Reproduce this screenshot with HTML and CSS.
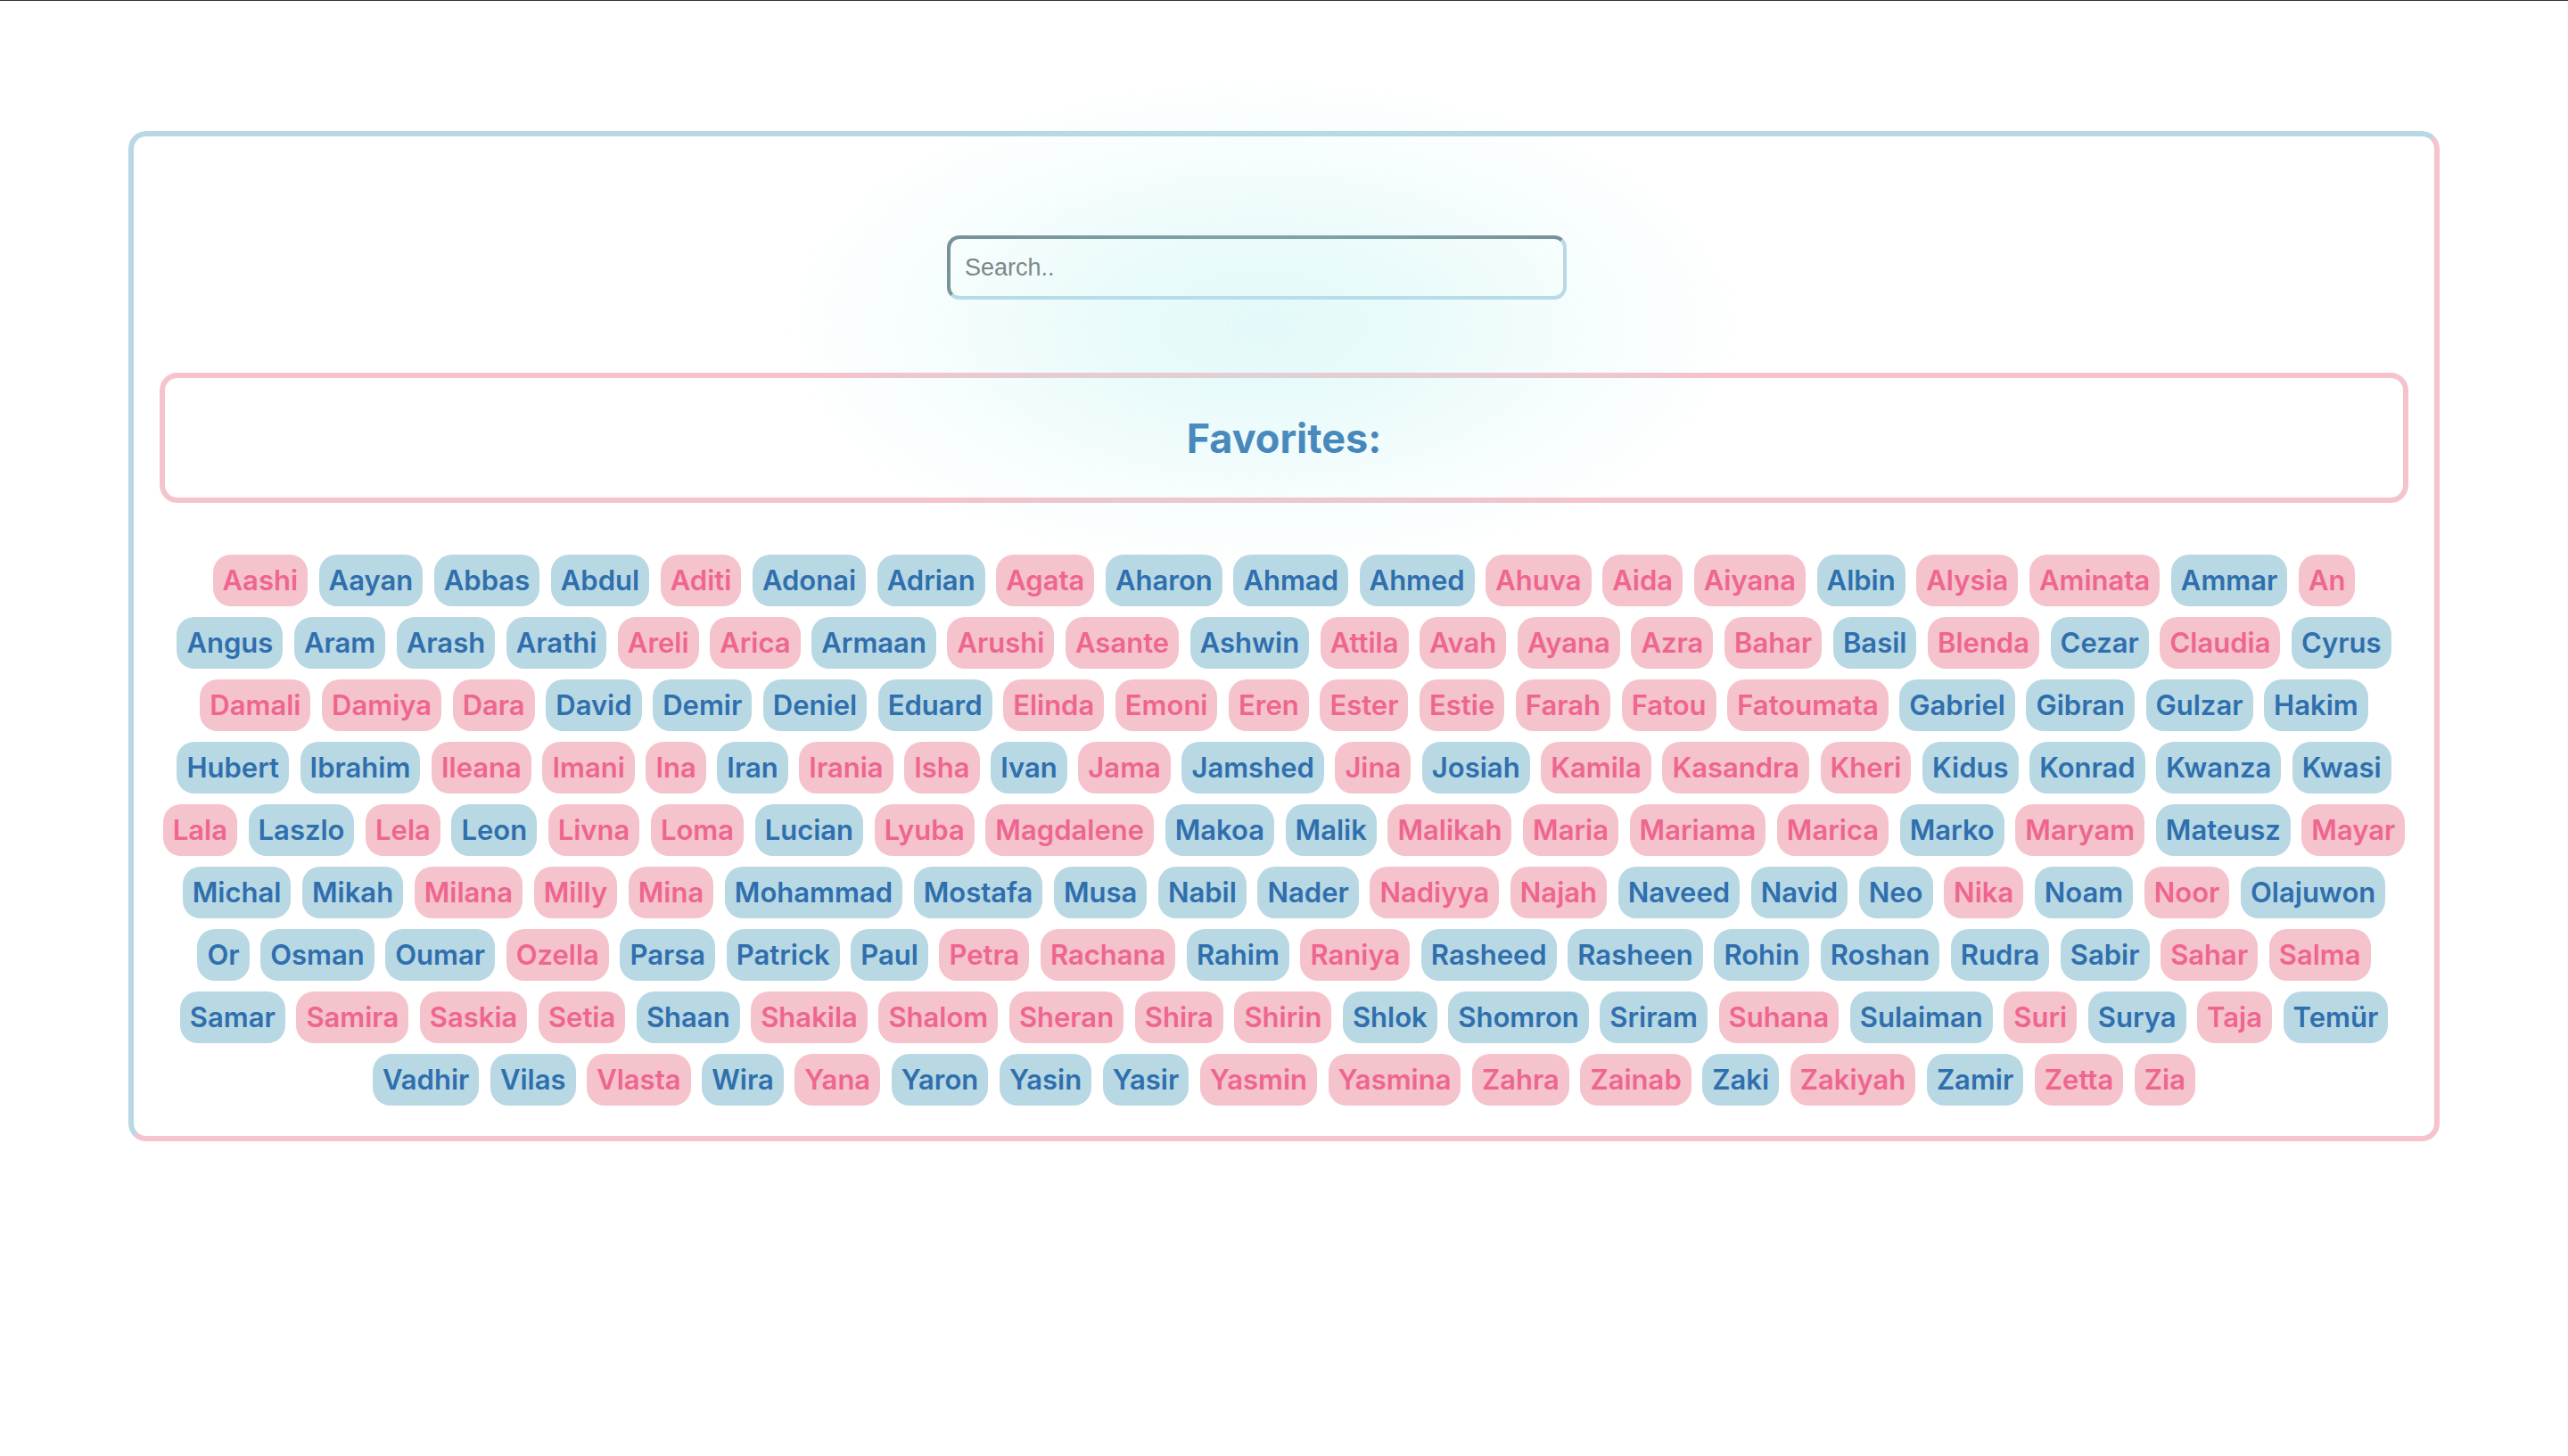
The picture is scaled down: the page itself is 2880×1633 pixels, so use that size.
FILE: index.html
```html
<!DOCTYPE html>
<html lang="en">
<head>
<meta charset="utf-8">
<title>Favorites</title>
<link rel="stylesheet" href="styles.css">
</head>
<body>
<div class="glow"></div>
<main class="app">
  <div class="search-row">
    <input class="search" type="text" placeholder="Search..">
  </div>
  <section class="favorites">
    <h2 class="favorites-title">Favorites:</h2>
  </section>
  <ul class="names">
    <li class="pill girl">Aashi</li><li class="pill boy">Aayan</li><li class="pill boy">Abbas</li><li class="pill boy">Abdul</li><li class="pill girl">Aditi</li><li class="pill boy">Adonai</li><li class="pill boy">Adrian</li><li class="pill girl">Agata</li><li class="pill boy">Aharon</li><li class="pill boy">Ahmad</li><li class="pill boy">Ahmed</li><li class="pill girl">Ahuva</li><li class="pill girl">Aida</li><li class="pill girl">Aiyana</li><li class="pill boy">Albin</li><li class="pill girl">Alysia</li><li class="pill girl">Aminata</li><li class="pill boy">Ammar</li><li class="pill girl">An</li>
    <li class="pill boy">Angus</li><li class="pill boy">Aram</li><li class="pill boy">Arash</li><li class="pill boy">Arathi</li><li class="pill girl">Areli</li><li class="pill girl">Arica</li><li class="pill boy">Armaan</li><li class="pill girl">Arushi</li><li class="pill girl">Asante</li><li class="pill boy">Ashwin</li><li class="pill girl">Attila</li><li class="pill girl">Avah</li><li class="pill girl">Ayana</li><li class="pill girl">Azra</li><li class="pill girl">Bahar</li><li class="pill boy">Basil</li><li class="pill girl">Blenda</li><li class="pill boy">Cezar</li><li class="pill girl">Claudia</li><li class="pill boy">Cyrus</li>
    <li class="pill girl">Damali</li><li class="pill girl">Damiya</li><li class="pill girl">Dara</li><li class="pill boy">David</li><li class="pill boy">Demir</li><li class="pill boy">Deniel</li><li class="pill boy">Eduard</li><li class="pill girl">Elinda</li><li class="pill girl">Emoni</li><li class="pill girl">Eren</li><li class="pill girl">Ester</li><li class="pill girl">Estie</li><li class="pill girl">Farah</li><li class="pill girl">Fatou</li><li class="pill girl">Fatoumata</li><li class="pill boy">Gabriel</li><li class="pill boy">Gibran</li><li class="pill boy">Gulzar</li><li class="pill boy">Hakim</li>
    <li class="pill boy">Hubert</li><li class="pill boy">Ibrahim</li><li class="pill girl">Ileana</li><li class="pill girl">Imani</li><li class="pill girl">Ina</li><li class="pill boy">Iran</li><li class="pill girl">Irania</li><li class="pill girl">Isha</li><li class="pill boy">Ivan</li><li class="pill girl">Jama</li><li class="pill boy">Jamshed</li><li class="pill girl">Jina</li><li class="pill boy">Josiah</li><li class="pill girl">Kamila</li><li class="pill girl">Kasandra</li><li class="pill girl">Kheri</li><li class="pill boy">Kidus</li><li class="pill boy">Konrad</li><li class="pill boy">Kwanza</li><li class="pill boy">Kwasi</li>
    <li class="pill girl">Lala</li><li class="pill boy">Laszlo</li><li class="pill girl">Lela</li><li class="pill boy">Leon</li><li class="pill girl">Livna</li><li class="pill girl">Loma</li><li class="pill boy">Lucian</li><li class="pill girl">Lyuba</li><li class="pill girl">Magdalene</li><li class="pill boy">Makoa</li><li class="pill boy">Malik</li><li class="pill girl">Malikah</li><li class="pill girl">Maria</li><li class="pill girl">Mariama</li><li class="pill girl">Marica</li><li class="pill boy">Marko</li><li class="pill girl">Maryam</li><li class="pill boy">Mateusz</li><li class="pill girl">Mayar</li>
    <li class="pill boy">Michal</li><li class="pill boy">Mikah</li><li class="pill girl">Milana</li><li class="pill girl">Milly</li><li class="pill girl">Mina</li><li class="pill boy">Mohammad</li><li class="pill boy">Mostafa</li><li class="pill boy">Musa</li><li class="pill boy">Nabil</li><li class="pill boy">Nader</li><li class="pill girl">Nadiyya</li><li class="pill girl">Najah</li><li class="pill boy">Naveed</li><li class="pill boy">Navid</li><li class="pill boy">Neo</li><li class="pill girl">Nika</li><li class="pill boy">Noam</li><li class="pill girl">Noor</li><li class="pill boy">Olajuwon</li>
    <li class="pill boy">Or</li><li class="pill boy">Osman</li><li class="pill boy">Oumar</li><li class="pill girl">Ozella</li><li class="pill boy">Parsa</li><li class="pill boy">Patrick</li><li class="pill boy">Paul</li><li class="pill girl">Petra</li><li class="pill girl">Rachana</li><li class="pill boy">Rahim</li><li class="pill girl">Raniya</li><li class="pill boy">Rasheed</li><li class="pill boy">Rasheen</li><li class="pill boy">Rohin</li><li class="pill boy">Roshan</li><li class="pill boy">Rudra</li><li class="pill boy">Sabir</li><li class="pill girl">Sahar</li><li class="pill girl">Salma</li>
    <li class="pill boy">Samar</li><li class="pill girl">Samira</li><li class="pill girl">Saskia</li><li class="pill girl">Setia</li><li class="pill boy">Shaan</li><li class="pill girl">Shakila</li><li class="pill girl">Shalom</li><li class="pill girl">Sheran</li><li class="pill girl">Shira</li><li class="pill girl">Shirin</li><li class="pill boy">Shlok</li><li class="pill boy">Shomron</li><li class="pill boy">Sriram</li><li class="pill girl">Suhana</li><li class="pill boy">Sulaiman</li><li class="pill girl">Suri</li><li class="pill boy">Surya</li><li class="pill girl">Taja</li><li class="pill boy">Temür</li>
    <li class="pill boy">Vadhir</li><li class="pill boy">Vilas</li><li class="pill girl">Vlasta</li><li class="pill boy">Wira</li><li class="pill girl">Yana</li><li class="pill boy">Yaron</li><li class="pill boy">Yasin</li><li class="pill boy">Yasir</li><li class="pill girl">Yasmin</li><li class="pill girl">Yasmina</li><li class="pill girl">Zahra</li><li class="pill girl">Zainab</li><li class="pill boy">Zaki</li><li class="pill girl">Zakiyah</li><li class="pill boy">Zamir</li><li class="pill girl">Zetta</li><li class="pill girl">Zia</li>
  </ul>
</main>
</body>
</html>
```
FILE: styles.css
```css
html, body {
  margin: 0;
  padding: 0;
  background: #ffffff;
}

body {
  border-top: 1px solid #333333;
  font-family: Inter, "Noto Sans", "Liberation Sans", sans-serif;
  min-height: 1632px;
}

.glow {
  position: fixed;
  inset: 0;
  pointer-events: none;
  z-index: 10;
  background: radial-gradient(ellipse 540px 280px at 1415px 365px,
    rgba(175, 238, 238, 0.34) 0%,
    rgba(175, 238, 238, 0.26) 35%,
    rgba(175, 238, 238, 0.12) 65%,
    rgba(175, 238, 238, 0) 100%);
}

.app {
  box-sizing: border-box;
  width: 90%;
  margin: 146px auto 0;
  border: 6px solid;
  border-color: #b8d8e4 #f5c3cc #f5c3cc #b8d8e4;
  border-radius: 20px;
  padding: 111px 29px 34px;
}

.search-row {
  display: flex;
  justify-content: center;
}

.search {
  box-sizing: border-box;
  width: 695px;
  height: 72px;
  margin-right: 61px;
  border: 4px solid;
  border-color: #718891 #b8d8e4 #b8d8e4 #718891;
  border-radius: 14px;
  padding: 0 16px;
  font-family: "Liberation Sans", Arial, sans-serif;
  font-size: 27px;
  color: #333333;
  background: #ffffff;
  outline: none;
}

.search::placeholder {
  color: #757575;
}

.favorites {
  box-sizing: border-box;
  margin-top: 82px;
  height: 146px;
  border: 6px solid #f5c3cc;
  border-radius: 20px;
  display: flex;
  align-items: center;
  justify-content: center;
}

.favorites-title {
  margin: 0;
  font-family: Inter, "Noto Sans", sans-serif;
  font-weight: 700;
  font-size: 45px;
  line-height: 1;
  color: #2f70b0;
}

.names {
  list-style: none;
  margin: 58px 0 0;
  padding: 0;
  display: flex;
  flex-wrap: wrap;
  justify-content: center;
  gap: 12px 12.6px;
}

.pill {
  height: 58px;
  line-height: 58px;
  padding: 0 11px;
  border-radius: 20px;
  font-family: Inter, "Noto Sans", sans-serif;
  font-weight: 600;
  font-size: 31px;
}

.girl {
  background: #f5c3cc;
  color: #ee6690;
}

.boy {
  background: #b8d8e4;
  color: #2f6fad;
}
```
